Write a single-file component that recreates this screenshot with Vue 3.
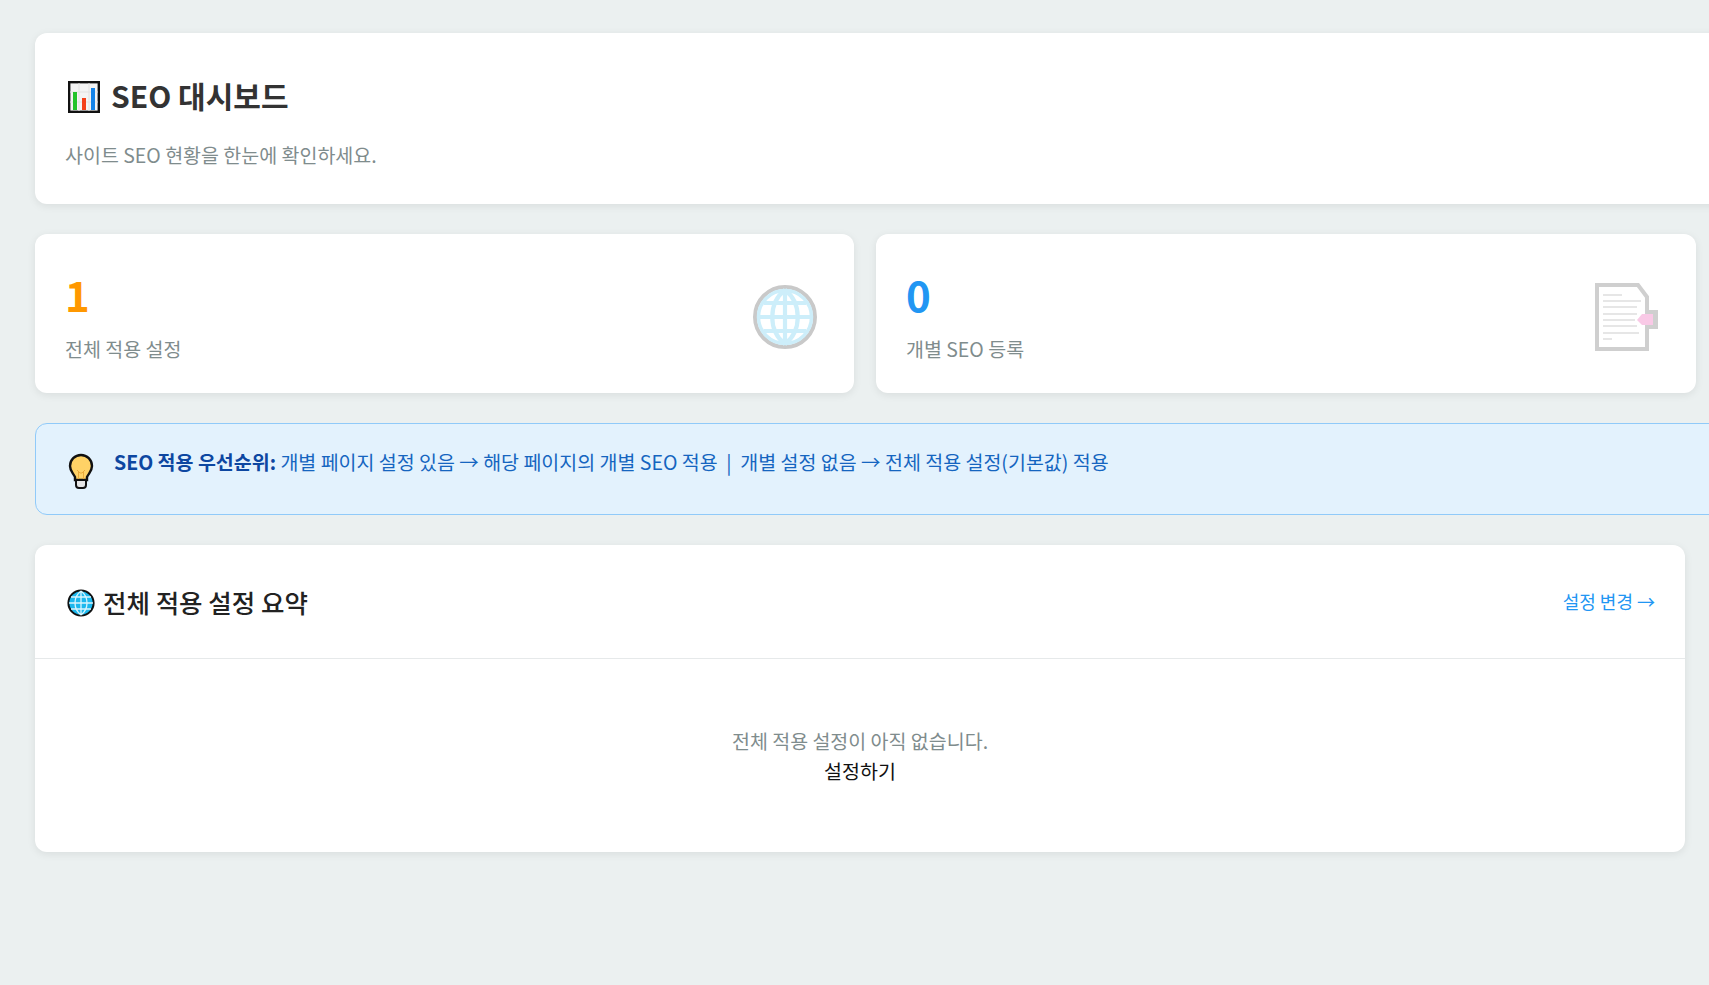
<script setup>
const stats = [
  { value: '1', label: '전체 적용 설정', tone: 'orange', icon: 'globe' },
  { value: '0', label: '개별 SEO 등록', tone: 'blue', icon: 'doc' }
]
</script>

<template>
  <div class="page">
    <header class="card head">
      <h1 class="title">
        <svg class="chart" viewBox="0 0 32 32" aria-hidden="true">
          <rect x="1.2" y="1.2" width="29.6" height="29.6" fill="#f4f4f4" stroke="#111" stroke-width="2.4" />
          <path d="M11 2v28M21 2v28M2 11h28M2 21h28" stroke="#e2e2e2" stroke-width="1" />
          <rect x="5" y="11" width="4" height="18" fill="#22c32a" />
          <rect x="14" y="17" width="4" height="12" fill="#f4401a" />
          <rect x="23" y="7" width="4" height="22" fill="#1483e8" />
        </svg>
        <span>SEO 대시보드</span>
      </h1>
      <p class="sub">사이트 SEO 현황을 한눈에 확인하세요.</p>
    </header>

    <section class="stats">
      <div v-for="s in stats" :key="s.label" class="card stat">
        <div class="stat-text">
          <div class="num" :class="s.tone">{{ s.value }}</div>
          <div class="label">{{ s.label }}</div>
        </div>
        <svg v-if="s.icon === 'globe'" class="stat-icon" viewBox="0 0 64 64" aria-hidden="true">
          <circle cx="32" cy="32" r="30" fill="#fff" stroke="#c9c9c9" stroke-width="4" />
          <circle cx="32" cy="32" r="26.5" fill="none" stroke="#cdeefa" stroke-width="3.5" />
          <g fill="none" stroke="#cdeefa" stroke-width="4.2">
            <path d="M32 5v54M5 32h54M11 18h42M11 46h42" />
            <path d="M32 5c-17 13-17 41 0 54M32 5c17 13 17 41 0 54" />
          </g>
        </svg>
        <svg v-else class="stat-icon doc" viewBox="0 0 64 68" aria-hidden="true">
          <rect x="54" y="27" width="9" height="19" fill="#cfcfcf" />
          <path d="M2 2H43L52 14V66H2z" fill="#fff" stroke="#cfcfcf" stroke-width="4" />
          <path d="M8 12h19M8 18h38M8 24h34M8 31h34M8 37h32M8 43h34M8 50h36M8 56h9" stroke="#e6e6e6" stroke-width="2" fill="none" />
          <path d="M42 37L47 31H58V42H47z" fill="#f9c9e6" />
        </svg>
      </div>
    </section>

    <div class="notice">
      <svg class="bulb" viewBox="0 0 26 36" aria-hidden="true">
        <path d="M13 2a11 11 0 0 0-11 11c0 5 3 7 5 11v3h12v-3c2-4 5-6 5-11A11 11 0 0 0 13 2z" fill="#ffd266" stroke="#111" stroke-width="2.4" />
        <path d="M10.5 26v-8M15.5 26v-8M9 17l3 3 2 0 3-3" stroke="#e9a93a" stroke-width="1" fill="none" />
        <path d="M8 27h10v5a3 3 0 0 1-3 3h-4a3 3 0 0 1-3-3z" fill="#e6e6e6" stroke="#111" stroke-width="2" />
      </svg>
      <p class="notice-text"><strong>SEO 적용 우선순위:</strong> 개별 페이지 설정 있음 → 해당 페이지의 개별 SEO 적용 &nbsp;|&nbsp; 개별 설정 없음 → 전체 적용 설정(기본값) 적용</p>
    </div>

    <section class="card summary">
      <div class="summary-head">
        <h2 class="summary-title">
          <svg class="mini-globe" viewBox="0 0 28 28" aria-hidden="true">
            <circle cx="14" cy="14" r="12.6" fill="#1bb8ee" stroke="#111" stroke-width="2" />
            <path d="M14 2v24M2 14h24M4 8h20M4 20h20M14 2c-8 6-8 18 0 24M14 2c8 6 8 18 0 24" fill="none" stroke="#d9f4fd" stroke-width="1.3" />
          </svg>
          <span>전체 적용 설정 요약</span>
        </h2>
        <a class="change" href="#">설정 변경 →</a>
      </div>
      <div class="empty">
        <p class="empty-text">전체 적용 설정이 아직 없습니다.</p>
        <a class="setup" href="#">설정하기</a>
      </div>
    </section>
  </div>
</template>

<style>
html, body { margin: 0; background: #ebf0f0; overflow: hidden; }
</style>

<style scoped>
.page {
  width: 1709px;
  height: 985px;
  box-sizing: border-box;
  padding: 33px 0 0 35px;
  overflow: hidden;
  background: #ebf0f0;
  font-family: "Noto Sans CJK KR", "Noto Sans", sans-serif;
  color: #333;
  display: flex;
  flex-direction: column;
  align-items: flex-start;
}
.card {
  background: #fff;
  border-radius: 12px;
  box-shadow: 0 2px 8px rgba(0, 0, 0, 0.08);
}
.head {
  width: 1760px;
  height: 171px;
  box-sizing: border-box;
  padding: 35px 30px 0;
  flex: none;
}
.title {
  margin: 0;
  display: flex;
  align-items: center;
  gap: 11px;
  font-size: 30px;
  line-height: 54px;
  font-weight: 700;
  color: #333;
}
.chart { width: 32px; height: 32px; margin: 3px 0 0 3px; }
.sub {
  margin: 18px 0 0;
  font-size: 19.5px;
  line-height: 29px;
  color: #7f8c8d;
}
.stats {
  margin-top: 30px;
  width: 1661px;
  display: grid;
  grid-template-columns: 819px 820px;
  gap: 22px;
  flex: none;
}
.stat {
  height: 159px;
  box-sizing: border-box;
  padding: 33px 37px 0 30px;
  display: flex;
  justify-content: space-between;
  align-items: flex-start;
}
.num {
  font-size: 42px;
  line-height: 54px;
  font-weight: 700;
}
.orange { color: #ff9800; }
.blue { color: #2196f3; }
.label {
  margin-top: 13px;
  font-size: 19.5px;
  line-height: 29px;
  color: #7f8c8d;
}
.stat-icon { width: 64px; height: 64px; margin-top: 18px; }
.stat-icon.doc { height: 68px; margin-top: 16px; }
.notice {
  margin-top: 30px;
  width: 1760px;
  height: 92px;
  box-sizing: border-box;
  padding: 22px 30px 0;
  display: flex;
  align-items: flex-start;
  gap: 20px;
  background: #e3f2fd;
  border: 1px solid #90caf9;
  border-radius: 12px;
  flex: none;
}
.bulb { width: 26px; height: 36px; margin: 7px 0 0 2px; flex: none; }
.notice-text {
  margin: 0;
  font-size: 19.5px;
  line-height: 32px;
  color: #1565c0;
}
.notice-text strong { color: #0d47a1; font-weight: 700; }
.summary {
  margin-top: 30px;
  width: 1650px;
  height: 307px;
  flex: none;
}
.summary-head {
  height: 114px;
  box-sizing: border-box;
  padding: 0 30px 1px;
  border-bottom: 1px solid #e6e9ea;
  display: flex;
  align-items: center;
  justify-content: space-between;
}
.summary-title {
  margin: 0;
  display: flex;
  align-items: center;
  gap: 8px;
  font-size: 25.5px;
  font-weight: 500;
  color: #222;
}
.mini-globe { width: 28px; height: 28px; margin: 3px 0 0 2px; }
.change {
  font-size: 18px;
  color: #2196f3;
  text-decoration: none;
}
.empty {
  padding-top: 67px;
  text-align: center;
  font-size: 19.5px;
  line-height: 30px;
}
.empty-text { margin: 0; color: #7f8c8d; }
.setup { color: #111; text-decoration: none; }
</style>
